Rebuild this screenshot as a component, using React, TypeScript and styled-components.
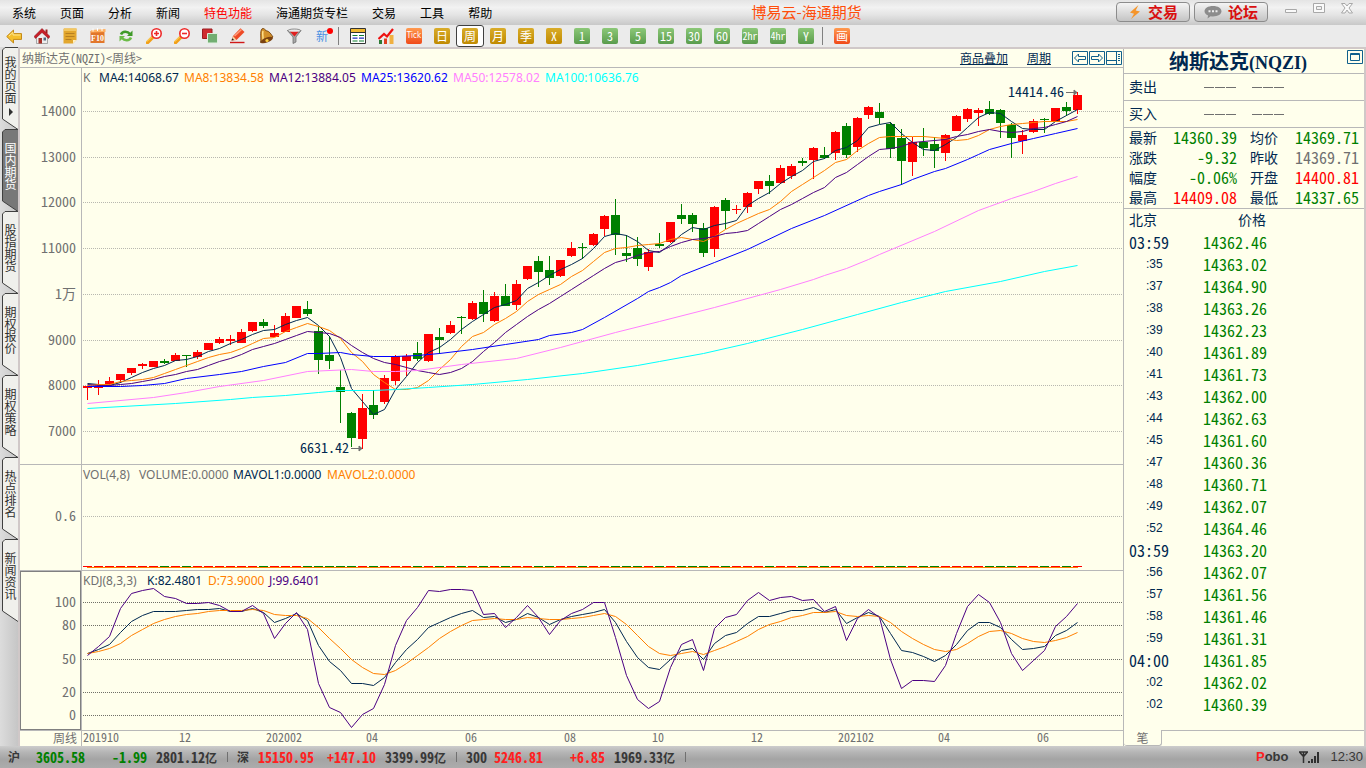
import React from 'react';
import styled, { createGlobalStyle, css } from 'styled-components';

const UI = "'Noto Sans CJK SC', sans-serif";
const MONO = "'Noto Sans Mono CJK SC', 'Noto Sans CJK SC', 'Liberation Mono', monospace";
const LATIN = "'Noto Sans', 'Open Sans', sans-serif";

const C = {
  paper: '#ffffec',
  line: '#b8b8b8',
  frame: '#d0c8c8',
  navy: '#002850',
  red: '#ff0000',
  green: '#008000',
  gray: '#707070',
  orange: '#ff8000',
  indigo: '#4b0082',
  blue: '#0000ff',
  pink: '#ff80ff',
  cyan: '#00ffff',
};

const GlobalStyle = createGlobalStyle`
  * { box-sizing: border-box; }
  body { margin: 0; background: ${C.paper}; font-family: ${UI}; font-size: 12px; }
  button { font: inherit; padding: 0; border: 0; background: none; color: inherit; }
  a { color: inherit; }
  svg { display: block; }
`;

const Page = styled.div`
  display: flex;
  flex-direction: column;
  min-height: 100vh;
`;

/* ---------- menu bar ---------- */

const MenuBar = styled.header`
  display: flex;
  height: 25px;
  background: linear-gradient(#e4e4e4, #f2f2f2 30%, #e4e4e4 60%, #c8c8c8);
`;
const Menus = styled.nav`
  display: flex;
  align-items: center;
  gap: 24px;
  padding-left: 12px;
`;
const MenuItem = styled.button<{ $hot?: boolean }>`
  line-height: 25px;
  color: ${(p) => (p.$hot ? C.red : '#000')};
`;
const Title = styled.h1`
  flex: 1;
  margin: 0;
  padding-left: 5px;
  font-size: 15px;
  font-weight: 400;
  line-height: 24px;
  text-align: center;
  color: #ff4d0a;
`;
const MenuRight = styled.div`
  display: flex;
  justify-content: flex-end;
  gap: 4px;
  padding: 2px 12px 0 0;
`;
const ActionButton = styled.button`
  display: flex;
  align-items: center;
  justify-content: center;
  gap: 6px;
  width: 74px;
  height: 20px;
  border: 1px solid #8c8c8c;
  border-radius: 4px;
  background: linear-gradient(#f4f4f4, #c4c4c4);
  color: #d90f0f;
  font-size: 15px;
  font-weight: 700;
  line-height: 18px;
`;
const WindowButtons = styled.div`
  display: flex;
  align-items: flex-start;
  gap: 14px;
  margin-left: 12px;
`;

/* ---------- toolbar ---------- */

const ToolBar = styled.div`
  display: flex;
  align-items: center;
  height: 22px;
  background: #ebebeb;
`;
const ToolButton = styled.button<{ $active?: boolean }>`
  display: flex;
  align-items: center;
  justify-content: center;
  width: 28px;
  height: 22px;
  ${(p) =>
    p.$active &&
    css`
      border: 1px solid #404040;
      border-radius: 3px;
      background: #fff;
    `}
`;
const Divider = styled.span`
  width: 8px;
  height: 18px;
  background: linear-gradient(#808080, #808080) 2px 0 / 1px 100% no-repeat;
`;
const badgeFill = {
  gold: 'linear-gradient(#d9ac2a, #c08a00)',
  green: 'linear-gradient(#8cc878, #5a9c4c)',
  orange: 'linear-gradient(#ff9a50, #f04a18)',
};
const badgeFont = {
  normal: css`
    font-family: ${MONO};
    font-size: 12px;
  `,
  small: css`
    font-family: ${MONO};
    font-size: 10px;
  `,
  tiny: css`
    font-family: 'DejaVu Sans Condensed', 'DejaVu Sans', sans-serif;
    font-size: 8px;
  `,
};
const Badge = styled.span<{ $tone: keyof typeof badgeFill; $size?: keyof typeof badgeFont }>`
  width: 16px;
  height: 16px;
  border-radius: 2px;
  background: ${(p) => badgeFill[p.$tone]};
  color: #fff;
  line-height: 15px;
  text-align: center;
  ${(p) => badgeFont[p.$size ?? 'normal']}
`;
const NewMark = styled.span`
  position: relative;
  color: #4a90e2;
  font-size: 12px;
  line-height: 20px;
  &::after {
    content: '';
    position: absolute;
    top: 2px;
    right: -5px;
    width: 6px;
    height: 6px;
    border-radius: 50%;
    background: #f00;
  }
`;

/* ---------- workspace ---------- */

const Workspace = styled.div`
  display: grid;
  grid-template-columns: 18px minmax(0, 1fr);
  flex: 1;
`;
const SideTabs = styled.nav`
  display: flex;
  flex-direction: column;
  background: linear-gradient(90deg, #dcdcdc, #c6c6c6);
`;
const SideTab = styled.button<{ $active?: boolean }>`
  position: relative;
  width: 18px;
  height: 82px;
  color: ${(p) => (p.$active ? '#fff' : '#303030')};
`;
const TabShape = styled.svg`
  position: absolute;
  inset: 0;
`;
const TabText = styled.span<{ $top?: boolean }>`
  position: relative;
  display: flex;
  align-items: center;
  height: 82px;
  width: 18px;
  padding: ${(p) => (p.$top ? 9 : 13)}px 0 0 3px;
  font-size: 12px;
  line-height: 15px;
  writing-mode: vertical-rl;
  text-orientation: upright;
`;
const Main = styled.main`
  display: grid;
  grid-template-columns: minmax(0, 1fr) 240px;
  border: 2px solid ${C.frame};
  border-bottom: 0;
  background: ${C.paper};
`;
const ChartColumn = styled.section`
  display: flex;
  flex-direction: column;
  border-right: 1px solid ${C.line};
`;
const ChartHead = styled.div`
  display: flex;
  align-items: center;
  height: 19px;
  padding-left: 2px;
  border-bottom: 1px solid ${C.line};
  font-family: ${MONO};
  font-size: 12px;
  line-height: 18px;
  color: ${C.gray};
`;
const HeadLinks = styled.div`
  display: flex;
  gap: 19px;
  margin-left: auto;
  margin-right: 21px;
  color: ${C.navy};
`;
const HeadIcons = styled.div`
  display: flex;
  gap: 1px;
  padding-right: 1px;
`;
const Panel = styled.div<{ $h: number; $grow?: boolean }>`
  position: relative;
  flex: ${(p) => (p.$grow ? 1 : 'none')};
  height: ${(p) => p.$h}px;
  overflow: hidden;
  border-bottom: 1px solid ${C.line};
`;
const Legend = styled.div`
  position: absolute;
  top: 2px;
  left: 63px;
  display: flex;
  gap: 4px;
  font-family: ${LATIN};
  font-size: 12px;
  line-height: 16px;
  white-space: nowrap;
`;
const LegendItem = styled.span<{ $color: string; $w?: number }>`
  min-width: ${(p) => p.$w ?? 0}px;
  color: ${(p) => p.$color};
`;
const Plot = styled.svg`
  width: 100%;
  height: 100%;
`;
const AxisText = styled.text`
  font-family: ${MONO};
  font-size: 14px;
  fill: ${C.gray};
  text-anchor: end;
`;
const MarkText = styled(AxisText)`
  fill: ${C.navy};
`;
const PeriodText = styled(AxisText)`
  font-size: 12px;
`;
const DateText = styled(AxisText)`
  font-size: 12px;
  text-anchor: middle;
`;
const DateAxis = styled.svg`
  width: 100%;
  height: 15px;
  overflow: visible;
`;

/* ---------- quote panel ---------- */

const Quote = styled.aside`
  display: flex;
  flex-direction: column;
  color: ${C.navy};
  font-size: 14px;
`;
const QuoteTitle = styled.div`
  position: relative;
  height: 25px;
  padding-right: 12px;
  border-bottom: 1px solid ${C.line};
  font-size: 20px;
  font-weight: 700;
  line-height: 24px;
  text-align: center;
  white-space: nowrap;
`;
const Ticker = styled.span`
  font-family: 'Liberation Serif', serif;
  font-size: 18px;
`;
const Maximize = styled.button`
  position: absolute;
  top: 1px;
  right: 1px;
`;
const SideRow = styled.div`
  display: grid;
  grid-template-columns: 75px 48px 1fr;
  height: 27px;
  padding-left: 5px;
  border-bottom: 1px solid ${C.line};
  line-height: 25px;
`;
const Dashes = styled.span`
  display: flex;
  align-items: center;
  gap: 1px;
  &::before,
  &::after,
  & > i {
    content: '';
    width: 10px;
    height: 1px;
    background: ${C.gray};
  }
`;
const Figures = styled.dl`
  display: grid;
  grid-template-columns: 28px 93px 28px 1fr;
  grid-auto-rows: 20px;
  margin: 0;
  padding: 0 5px 0 5px;
  border-bottom: 1px solid ${C.line};
  line-height: 19px;
`;
const Label = styled.dt``;
const Value = styled.dd<{ $color: string }>`
  margin: 0;
  padding-right: 13px;
  font-family: ${MONO};
  font-size: 16px;
  text-align: right;
  color: ${(p) => p.$color};
  &:nth-child(4n) {
    padding-right: 0;
  }
`;
const Ticks = styled.table`
  width: 100%;
  border-collapse: collapse;
  th {
    height: 23px;
    padding: 0 0 0 5px;
    font-weight: 400;
    line-height: 21px;
    text-align: left;
    vertical-align: top;
  }
  th + th {
    padding-left: 35px;
  }
  td {
    height: 22px;
    padding: 0;
    line-height: 20px;
    vertical-align: top;
  }
`;
const TimeCell = styled.td<{ $full: boolean }>`
  width: 79px;
  font-family: ${(p) => (p.$full ? MONO : "'Liberation Sans', sans-serif")};
  font-size: ${(p) => (p.$full ? 16 : 12)}px;
  && {
    padding-left: ${(p) => (p.$full ? 5 : 22)}px;
  }
`;
const PriceCell = styled.td`
  font-family: ${MONO};
  font-size: 16px;
  color: ${C.green};
`;
const BottomTabs = styled.div`
  display: flex;
  height: 16px;
  margin-top: auto;
`;
const BottomTab = styled.button`
  width: 38px;
  border: 1px solid ${C.line};
  border-top: 0;
  border-left: 0;
  border-radius: 0 0 3px 3px;
  font-size: 12px;
  line-height: 15px;
  color: ${C.gray};
`;
const BottomFill = styled.div`
  flex: 1;
  border-top: 1px solid ${C.line};
`;

/* ---------- status bar ---------- */

const StatusBar = styled.footer`
  display: flex;
  align-items: center;
  height: 22px;
  padding: 0 3px 0 8px;
  background: linear-gradient(#cccccc, #b4b4b4 30%, #a4a4a4 60%, #acacac);
  color: #383838;
  font-weight: 700;
  line-height: 22px;
`;
const IndexGroup = styled.div`
  display: grid;
  grid-template-columns: 21px 56px 62px 71px 19px;
  align-items: center;
  font-family: ${MONO};
  font-size: 14px;
`;
const IndexName = styled.span<{ $code: boolean }>`
  font-size: ${(p) => (p.$code ? 14 : 12)}px;
`;
const IndexNumber = styled.span<{ $up: boolean }>`
  text-align: right;
  color: ${(p) => (p.$up ? '#ff2020' : C.green)};
`;
const Turnover = styled.span`
  padding-left: 9px;
  white-space: nowrap;
  small {
    font-size: 12px;
  }
`;
const StatusRule = styled.i`
  justify-self: center;
  width: 1px;
  height: 10px;
  background: #707070;
`;
const StatusRight = styled.div`
  display: flex;
  align-items: center;
  gap: 10px;
  margin-left: auto;
`;
const Brand = styled.span`
  font-family: 'Liberation Sans', sans-serif;
  font-size: 13px;
  em {
    font-style: normal;
    color: #ff2020;
  }
`;
const Clock = styled.time`
  font-family: 'Liberation Sans', sans-serif;
  font-size: 13px;
  font-weight: 400;
`;

/* ---------- data ---------- */

// [wick top, body top, body bottom, wick bottom, rising]
const candles: [number, number, number, number, number][] = [
  [386, 386, 388, 400, 1], [380, 386, 388, 395, 1], [377, 381, 384, 385, 1], [374, 374, 380, 383, 1],
  [368, 368, 373, 375, 1], [363, 364, 366, 369, 1], [361, 361, 367, 367, 1], [359, 361, 363, 364, 0],
  [353, 355, 361, 361, 1], [355, 355, 356, 367, 0], [350, 352, 357, 359, 1], [343, 343, 350, 350, 1],
  [337, 339, 343, 344, 1], [335, 339, 341, 345, 1], [329, 332, 343, 343, 1], [322, 322, 331, 332, 1],
  [319, 322, 326, 328, 0], [325, 333, 337, 337, 1], [313, 316, 332, 332, 1], [306, 306, 318, 318, 1],
  [301, 309, 314, 316, 0], [326, 331, 360, 374, 0], [336, 355, 361, 369, 0], [370, 387, 392, 423, 0],
  [412, 413, 438, 447, 0], [394, 408, 439, 449, 1], [390, 405, 415, 419, 0], [375, 378, 402, 404, 1],
  [355, 356, 381, 385, 1], [354, 356, 361, 376, 1], [342, 353, 359, 361, 0], [334, 334, 361, 362, 1],
  [328, 337, 340, 354, 0], [321, 325, 333, 334, 1], [316, 317, 318, 334, 0], [301, 303, 319, 320, 1],
  [290, 302, 314, 322, 0], [292, 296, 321, 322, 1], [284, 296, 306, 306, 0], [280, 284, 305, 310, 1],
  [266, 266, 279, 280, 1], [256, 261, 272, 287, 0], [256, 270, 278, 285, 0], [260, 260, 276, 277, 1],
  [242, 248, 256, 257, 1], [243, 247, 248, 259, 0], [233, 234, 245, 246, 1], [215, 216, 229, 236, 1],
  [199, 215, 235, 255, 0], [235, 253, 256, 262, 0], [237, 248, 259, 266, 0], [249, 252, 267, 271, 1],
  [233, 244, 246, 248, 0], [222, 222, 242, 243, 1], [204, 215, 219, 224, 0], [213, 215, 224, 232, 0],
  [223, 228, 253, 257, 0], [206, 207, 249, 257, 1], [198, 200, 211, 229, 0], [205, 209, 210, 214, 1],
  [192, 193, 207, 213, 1], [181, 181, 189, 194, 1], [175, 181, 186, 194, 0], [165, 168, 183, 184, 1],
  [164, 166, 176, 179, 1], [158, 161, 163, 166, 0], [147, 148, 160, 179, 1], [147, 155, 158, 159, 0],
  [131, 132, 153, 160, 1], [123, 126, 155, 158, 0], [117, 118, 147, 152, 1], [106, 107, 115, 119, 1],
  [103, 112, 118, 124, 0], [122, 124, 149, 158, 0], [129, 138, 161, 185, 0], [137, 142, 162, 176, 1],
  [128, 142, 148, 156, 0], [137, 144, 151, 168, 0], [134, 135, 153, 161, 1], [115, 116, 131, 131, 1],
  [108, 109, 119, 122, 1], [108, 110, 113, 126, 1], [101, 109, 114, 115, 0], [109, 110, 123, 138, 0],
  [123, 125, 138, 158, 0], [130, 135, 141, 154, 1], [119, 121, 132, 133, 1], [118, 119, 120, 133, 0],
  [108, 108, 121, 121, 1], [102, 107, 111, 116, 0], [92, 95, 110, 114, 1],
];

const ma4 = [383, 384, 385, 382, 377, 372, 368, 365, 360, 359, 356, 351, 348, 343, 339, 334, 330, 329, 324, 320, 317, 325, 336, 357, 388, 401, 414, 409, 389, 376, 362, 352, 347, 339, 329, 321, 314, 307, 304, 300, 288, 282, 275, 269, 264, 258, 248, 236, 233, 235, 241, 250, 252, 244, 234, 227, 229, 225, 223, 220, 205, 198, 192, 183, 176, 170, 161, 158, 150, 147, 140, 127, 124, 122, 133, 142, 149, 150, 144, 137, 127, 117, 112, 113, 121, 128, 129, 129, 121, 115, 109];
const ma8 = [385, 384, 384, 381, 380, 379, 377, 373, 369, 365, 361, 357, 354, 352, 348, 343, 338, 337, 331, 327, 323, 326, 330, 338, 352, 361, 374, 382, 389, 389, 387, 380, 369, 359, 346, 336, 332, 324, 318, 311, 301, 294, 289, 284, 276, 270, 261, 252, 248, 247, 245, 244, 243, 239, 237, 239, 241, 236, 229, 223, 218, 213, 209, 201, 191, 184, 177, 170, 162, 159, 150, 143, 137, 136, 136, 136, 136, 137, 138, 140, 139, 135, 129, 126, 124, 123, 122, 121, 121, 121, 119];
const ma12 = [384, 385, 385, 384, 383, 381, 379, 376, 374, 371, 369, 365, 361, 358, 354, 349, 346, 343, 339, 335, 331, 332, 333, 337, 345, 352, 358, 362, 364, 367, 370, 372, 374, 372, 368, 361, 351, 342, 332, 324, 316, 309, 303, 296, 289, 282, 275, 268, 262, 259, 255, 252, 251, 246, 242, 239, 238, 236, 233, 232, 230, 223, 216, 209, 204, 198, 192, 187, 177, 172, 164, 156, 149, 148, 146, 142, 141, 140, 139, 136, 134, 131, 129, 131, 132, 131, 128, 127, 124, 121, 116];
const ma25: [number, number][] = [[0, 386], [3, 386], [5, 385], [7, 383], [9, 378], [12, 374], [14, 371], [16, 366], [18, 362], [20, 353], [21, 353], [23, 352], [24, 354], [26, 356], [28, 356], [30, 355], [32, 353], [35, 349], [38, 344], [41, 339], [42, 335], [44, 332], [45, 329], [47, 317], [50, 298], [51, 291], [52, 287], [53, 282], [54, 275], [57, 262], [60, 249], [64, 228], [67, 215], [71, 195], [72, 191], [74, 184], [75, 179], [77, 171], [78, 168], [80, 159], [81, 154], [82, 149], [84, 143], [86, 138], [88, 133], [90, 128]];
const ma50: [number, number][] = [[0, 403], [6, 397], [9, 392], [12, 386], [16, 380], [20, 371], [24, 369], [26, 371], [28, 371], [30, 370], [34, 364], [39, 358], [43, 347], [48, 332], [52, 321], [57, 307], [63, 289], [66, 279], [67, 275], [69, 268], [71, 259], [72, 254], [77, 231], [81, 210], [82, 206], [84, 198], [86, 191], [88, 183], [90, 176]];
const ma100: [number, number][] = [[0, 408], [8, 403], [13, 399], [15, 397], [18, 395], [21, 392], [23, 390], [26, 390], [28, 389], [31, 387], [35, 384], [40, 379], [45, 373], [50, 365], [52, 361], [56, 353], [60, 343], [65, 329], [70, 314], [74, 302], [78, 291], [83, 281], [87, 271], [90, 265]];
const kdjJ = [655, 646, 636, 608, 593, 590, 588, 596, 598, 603, 603, 602, 605, 611, 611, 605, 613, 638, 623, 612, 629, 683, 707, 712, 727, 714, 708, 684, 645, 620, 607, 590, 591, 589, 589, 590, 614, 613, 627, 617, 605, 617, 634, 620, 613, 609, 602, 602, 637, 675, 699, 708, 701, 667, 644, 639, 670, 628, 617, 614, 600, 592, 600, 597, 596, 600, 599, 611, 606, 640, 618, 609, 617, 659, 688, 680, 680, 681, 665, 633, 606, 594, 602, 622, 653, 670, 660, 650, 626, 616, 603];
const kdjK = [653, 649, 644, 632, 621, 615, 611, 611, 611, 610, 609, 609, 608, 611, 611, 608, 612, 622, 618, 613, 620, 645, 661, 670, 683, 683, 685, 677, 662, 649, 639, 627, 622, 617, 613, 610, 617, 616, 622, 619, 613, 617, 624, 619, 616, 614, 612, 609, 622, 641, 657, 667, 669, 659, 650, 648, 659, 643, 635, 632, 623, 616, 616, 613, 610, 610, 607, 612, 609, 623, 617, 612, 616, 633, 650, 652, 656, 661, 655, 644, 630, 622, 622, 627, 639, 649, 648, 646, 635, 630, 622];
const kdjD = [653, 651, 648, 643, 635, 629, 623, 619, 616, 614, 613, 611, 610, 610, 610, 609, 610, 614, 615, 615, 618, 627, 638, 648, 659, 667, 673, 674, 670, 663, 655, 647, 638, 631, 625, 620, 619, 618, 619, 619, 617, 618, 619, 619, 618, 617, 615, 613, 616, 624, 635, 646, 653, 655, 653, 651, 654, 650, 646, 641, 636, 629, 624, 621, 617, 615, 612, 612, 611, 615, 616, 615, 616, 622, 631, 638, 644, 649, 651, 649, 643, 636, 631, 630, 633, 638, 641, 642, 640, 637, 632];

const xAt = (i: number) => 87 + 11 * i;
const dense = (ys: number[]): [number, number][] => ys.map((y, i) => [i, y]);

const Line = ({ data, color }: { data: [number, number][]; color: string }) => (
  <polyline
    points={data.map(([i, y]) => `${xAt(i) + 0.5},${y + 0.5}`).join(' ')}
    fill="none"
    stroke={color}
    strokeWidth="1"
  />
);
const Grid = ({ y, color = '#b8b8b0' }: { y: number; color?: string }) => (
  <line x1="83" x2="4000" y1={y + 0.5} y2={y + 0.5} stroke={color} strokeDasharray="1 1" />
);
const AxisRule = ({ h }: { h: number }) => <path d={`M81.500 0v${h}`} stroke={C.line} />;
const PointArrow = ({ x, y }: { x: number; y: number }) => (
  <path d={`M${x} ${y + 0.5}h11M${x + 8} ${y - 2}l3 2.5l-3 2.5z`} fill={C.gray} stroke={C.gray} />
);

const priceAxis: [string, number][] = [['14000', 111], ['13000', 157], ['12000', 202], ['11000', 248], ['1万', 294], ['9000', 340], ['8000', 385], ['7000', 431]];
const kdjAxis: [string, number][] = [['100', 602], ['80', 625], ['50', 659], ['20', 692], ['0', 715]];
const dates: [string, number][] = [['12', 185], ['202002', 284], ['04', 372], ['06', 471], ['08', 570], ['10', 658], ['12', 757], ['202102', 856], ['04', 944], ['06', 1043]];

const figures: [string, string, string][] = [
  ['最新', '14360.39', C.green], ['均价', '14369.71', C.green],
  ['涨跌', '-9.32', C.green], ['昨收', '14369.71', C.gray],
  ['幅度', '-0.06%', C.green], ['开盘', '14400.81', C.red],
  ['最高', '14409.08', C.red], ['最低', '14337.65', C.green],
];
const ticks: [string, string][] = [
  ['03:59', '14362.46'], [':35', '14363.02'], [':37', '14364.90'], [':38', '14363.26'], [':39', '14362.23'],
  [':40', '14361.89'], [':41', '14361.73'], [':43', '14362.00'], [':44', '14362.63'], [':45', '14361.60'],
  [':47', '14360.36'], [':48', '14360.71'], [':49', '14362.07'], [':52', '14364.46'], ['03:59', '14363.20'],
  [':56', '14362.07'], [':57', '14361.56'], [':58', '14361.46'], [':59', '14361.31'], ['04:00', '14361.85'],
  [':02', '14362.02'], [':02', '14360.39'],
];
const indexes: [string, string, string, string, boolean][] = [
  ['沪', '3605.58', '-1.99', '2801.12', false],
  ['深', '15150.95', '+147.10', '3399.99', true],
  ['300', '5246.81', '+6.85', '1969.33', true],
];
const menus = ['系统', '页面', '分析', '新闻', '特色功能', '海通期货专栏', '交易', '工具', '帮助'];
const sideTabs = ['我的页面', '国内期货', '股指期货', '期权报价', '期权策略', '热点排名', '新闻资讯'];

/* ---------- icons ---------- */

const Icon = ({ children }: { children: React.ReactNode }) => (
  <svg width="16" height="16" viewBox="0 0 16 16">{children}</svg>
);

const BackIcon = () => (
  <Icon>
    <path d="M.7 8.500L7.500 2v3.600h8v5.800h-8V15z" fill="#f5bf2c" stroke="#c48a18" strokeLinejoin="round" />
    <path d="M3 8l4-3.600V7h7.500" fill="none" stroke="#ffe890" />
  </Icon>
);
const HomeIcon = () => (
  <Icon>
    <path d="M2.500 8v7.500h11V8L8 3.500z" fill="#eeeeee" stroke="#777" strokeWidth=".6" />
    <path d="M11.500 1.500h2v4h-2z" fill="#a02020" />
    <path d="M0 8.500L8 .5l8 8-1.500 2L8 4.500 1.500 10.500z" fill="#c81e28" stroke="#801018" strokeWidth=".5" />
    <path d="M4.500 10H8v5.500H4.500z" fill="#a83028" />
    <path d="M9.500 9.500H12v3H9.500z" fill="#506880" />
  </Icon>
);
const NoteIcon = () => (
  <Icon>
    <path d="M2 .5h12.500V12L11 15.500H1.500V1z" fill="#e3a72e" />
    <path d="M2 .5h12.500v2.500H2z" fill="#f3c760" />
    <path d="M3.500 5.500h9M3.500 8.500h9M3.500 11.500h6" stroke="#b88020" />
    <path d="M11 15.500V12h3.500z" fill="#fff0c0" />
  </Icon>
);
const F10Icon = () => (
  <Icon>
    <path d="M.5 3h14v12h-14z" fill="#e2762a" />
    <path d="M1.500 2L15.500 1v3l-15 .5z" fill="#ffb060" />
    <path d="M3 .5v3M7.500 0v3M12 0v3" stroke="#fff" />
    <text x="7.500" y="12.500" fontSize="8" fontWeight="700" textAnchor="middle" fill="#fff" fontFamily="Liberation Serif">F10</text>
  </Icon>
);
const RefreshIcon = () => (
  <Icon>
    <path d="M3 6.500C4.500 3 9.500 3 12 6" fill="none" stroke="#3f9a28" strokeWidth="2.600" />
    <path d="M14.500 2.500V8H9z" fill="#3f9a28" />
    <path d="M13 9.500C11.500 13 6.500 13 4 10" fill="none" stroke="#6cbc48" strokeWidth="2.600" />
    <path d="M1.500 13.500V8H7z" fill="#6cbc48" />
  </Icon>
);
const ZoomIcon = ({ plus }: { plus?: boolean }) => (
  <Icon>
    <path d="M6.500 9.500L1.500 14.500" stroke="#f2a018" strokeWidth="3.500" strokeLinecap="round" />
    <path d="M5.500 9L1 13.500" stroke="#ffe070" strokeLinecap="round" />
    <circle cx="10.500" cy="5.500" r="4.700" fill="#fff" stroke="#ee2a2a" strokeWidth="1.600" />
    <path d={plus ? 'M8 5.500h5M10.500 3v5' : 'M8 5.500h5'} stroke="#ee2a2a" strokeWidth="1.600" />
  </Icon>
);
const LayersIcon = () => (
  <Icon>
    <path d="M.5 1h9.500v9.500H.5z" fill="#cf2c30" stroke="#9c1c20" />
    <path d="M5.500 5.500h10V15h-10z" fill="#72ae72" stroke="#e0f0e0" />
  </Icon>
);
const PencilIcon = () => (
  <Icon>
    <path d="M1.500 12.500L3 8 10.500.3l4 3.700L6.500 12z" fill="#ee4a26" />
    <path d="M4.500 8L11.500 1.500" stroke="#ff9c78" strokeWidth="1.600" />
    <path d="M1.500 12.500L3 8l3.500 4z" fill="#f2d2a0" />
    <path d="M1.500 12.500l.8-2.200 1.800 1.800z" fill="#222" />
    <path d="M0 14.500h14.500" stroke="#d01818" strokeWidth="1.400" />
  </Icon>
);
const BellIcon = () => (
  <Icon>
    <path d="M4 .8C6 0 7 1 7.500 2.500c4 .5 5.500 3.500 7.500 6.500L2.500 14.500C3.500 10 1.500 4 4 .8z" fill="#d2902a" stroke="#6a3808" strokeWidth=".8" />
    <path d="M5 3c-1 3 .5 6 0 9" stroke="#ffe08a" strokeWidth="1.500" fill="none" />
    <ellipse cx="8.800" cy="12" rx="6.500" ry="2.500" transform="rotate(-22 8.800 12)" fill="#7a4210" />
    <circle cx="9" cy="12.500" r="1.600" fill="#ffd040" />
  </Icon>
);
const FunnelIcon = () => (
  <Icon>
    <path d="M1.500 2.500L7 9v6.500l3-1.500V9l5-6.500z" fill="#a8a8a8" stroke="#666" strokeWidth=".7" />
    <ellipse cx="8.300" cy="2.800" rx="6.500" ry="1.800" fill="#e8e8e8" stroke="#666" strokeWidth=".7" />
    <path d="M4 3.800h8.500L8.500 8.500z" fill="#e02020" />
  </Icon>
);
const TableIcon = () => (
  <Icon>
    <path d="M.5.5h15v15H.5z" fill="#fff" stroke="#333" />
    <path d="M1 1h14v3H1z" fill="#f0b830" />
    <path d="M1 4.500h14" stroke="#333" />
    <path d="M2.500 7.500h5M9 7.500h5" stroke="#108030" strokeWidth="1.200" />
    <path d="M2.500 10.200h5M9 10.200h5" stroke="#2030c0" strokeWidth="1.200" />
    <path d="M2.500 13h5M9 13h5" stroke="#108030" strokeWidth="1.200" />
  </Icon>
);
const TrendIcon = () => (
  <Icon>
    <path d="M1 12h3v4H1z" fill="#2e7a34" />
    <path d="M6 10.500h3V16H6z" fill="#e04020" />
    <path d="M11.500 7h4v9h-4z" fill="#f0b040" />
    <path d="M.5 11L6 6l3 2.500 6-7.500" fill="none" stroke="#ee1010" strokeWidth="2.200" />
  </Icon>
);
const BoltIcon = () => (
  <svg width="14" height="16" viewBox="0 0 14 16"><path d="M10.500 1L2 8.500l4 1.200L3 15l9-7.500-4.300-1z" fill="#f5952a" /></svg>
);
const ChatIcon = () => (
  <svg width="18" height="14" viewBox="0 0 18 14">
    <path d="M9 1c5 0 8.500 2.200 8.500 5.300S14 11.500 9 11.500c-.8 0-1.600 0-2.300-.2L3.500 13.500l.6-3C2 9.600.5 8.100.5 6.300.5 3.200 4 1 9 1z" fill="#8c8c8c" />
    <path d="M4.500 5.300h2v2h-2zM8 5.300h2v2H8zM11.500 5.300h2v2h-2z" fill="#eee" />
  </svg>
);

const FrameIcon = ({ d }: { d: string }) => (
  <svg width="16" height="14" viewBox="0 0 16 14">
    <path d="M.5.5h15v13H.5z" fill="none" stroke="#10608c" />
    <path d={d} fill="none" stroke="#10608c" />
  </svg>
);

const WindowIcon = ({ d }: { d: string }) => (
  <svg width="14" height="12" viewBox="0 -1 14 12"><path d={d} fill="#fafafa" stroke="#a8a8a8" fillRule="evenodd" /></svg>
);

type Tool = { name: string; body: React.ReactNode; active?: boolean };
const pageTools: Tool[] = [
  { name: '后退', body: <BackIcon /> }, { name: '主页', body: <HomeIcon /> }, { name: '公告', body: <NoteIcon /> },
  { name: 'F10', body: <F10Icon /> }, { name: '刷新', body: <RefreshIcon /> }, { name: '放大', body: <ZoomIcon plus /> },
  { name: '缩小', body: <ZoomIcon /> }, { name: '叠加', body: <LayersIcon /> }, { name: '画笔', body: <PencilIcon /> },
  { name: '预警', body: <BellIcon /> }, { name: '筛选', body: <FunnelIcon /> }, { name: '新', body: <NewMark>新</NewMark> },
];
const periodTools: Tool[] = [
  { name: '报价', body: <TableIcon /> },
  { name: '走势', body: <TrendIcon /> },
  { name: 'Tick', body: <Badge $tone="orange" $size="tiny">Tick</Badge> },
  ...['日', '周', '月', '季', 'X'].map((t) => ({ name: t, body: <Badge $tone="gold">{t}</Badge>, active: t === '周' })),
  ...['1', '3', '5', '15', '30', '60', '2hr', '4hr', 'Y'].map((t) => ({
    name: t,
    body: <Badge $tone="green" $size={t.length > 2 ? 'small' : 'normal'}>{t}</Badge>,
  })),
];

const Tools = ({ items }: { items: Tool[] }) => (
  <>
    {items.map((t) => (
      <ToolButton key={t.name} $active={t.active} aria-label={t.name}>{t.body}</ToolButton>
    ))}
  </>
);

/* ---------- page ---------- */

const PricePanel = () => (
  <Panel $h={397}>
    <Plot>
      <g transform="translate(-20 -68)">
        {priceAxis.map(([t, y]) => (
          <React.Fragment key={t}>
            <AxisText x="76" y={y + 5}>{t}</AxisText>
            <Grid y={y} />
          </React.Fragment>
        ))}
        <AxisRule h={464} />
        {candles.map(([wt, bt, bb, wb, up], i) => (
          <g key={i} fill={up ? C.red : C.green} shapeRendering="crispEdges">
            <rect x={xAt(i)} y={wt} width="1" height={wb - wt} />
            <rect x={xAt(i) - 4} y={bt} width="9" height={bb - bt} />
          </g>
        ))}
        <Line data={dense(ma4)} color={C.navy} />
        <Line data={dense(ma8)} color={C.orange} />
        <Line data={dense(ma12)} color={C.indigo} />
        <Line data={ma25} color={C.blue} />
        <Line data={ma50} color={C.pink} />
        <Line data={ma100} color={C.cyan} />
        <MarkText x="1064" y="97">14414.46</MarkText>
        <PointArrow x={1066} y={92} />
        <MarkText x="349" y="453">6631.42</MarkText>
        <PointArrow x={351} y={448} />
      </g>
    </Plot>
    <Legend>
      <LegendItem $color={C.gray} $w={12}>K</LegendItem>
      <LegendItem $color={C.navy} $w={81}>MA4:14068.67</LegendItem>
      <LegendItem $color={C.orange} $w={81}>MA8:13834.58</LegendItem>
      <LegendItem $color={C.indigo} $w={88}>MA12:13884.05</LegendItem>
      <LegendItem $color={C.blue} $w={88}>MA25:13620.62</LegendItem>
      <LegendItem $color={C.pink} $w={88}>MA50:12578.02</LegendItem>
      <LegendItem $color={C.cyan}>MA100:10636.76</LegendItem>
    </Legend>
  </Panel>
);

const VolumePanel = () => (
  <Panel $h={106}>
    <Plot>
      <g transform="translate(-20 -465)">
        <AxisText x="76" y="521">0.6</AxisText>
        <Grid y={516} />
        <AxisRule h={570} />
        <line x1="87" x2="1078" y1="567.5" y2="567.5" stroke={C.orange} />
        {candles.map((c, i) => (
          <rect key={i} x={xAt(i) - 4} y="566" width="9" height="1" fill={c[4] ? C.red : C.green} />
        ))}
      </g>
    </Plot>
    <Legend>
      <LegendItem $color={C.gray} $w={52}>VOL(4,8)</LegendItem>
      <LegendItem $color={C.gray} $w={90}>VOLUME:0.0000</LegendItem>
      <LegendItem $color={C.navy} $w={90}>MAVOL1:0.0000</LegendItem>
      <LegendItem $color={C.orange} $w={90}>MAVOL2:0.0000</LegendItem>
    </Legend>
  </Panel>
);

const KdjPanel = () => (
  <Panel $h={160} $grow>
    <Plot>
      <g transform="translate(-20 -571)">
        {kdjAxis.map(([t, y]) => (
          <React.Fragment key={t}>
            <AxisText x="76" y={y + 5}>{t}</AxisText>
            <Grid y={y} color="#707068" />
          </React.Fragment>
        ))}
        <AxisRule h={1000} />
        <rect x="20.500" y="571.500" width="60" height="158" fill="none" stroke="#808080" />
        <Line data={dense(kdjK)} color={C.navy} />
        <Line data={dense(kdjD)} color={C.orange} />
        <Line data={dense(kdjJ)} color={C.indigo} />
      </g>
    </Plot>
    <Legend>
      <LegendItem $color={C.gray} $w={60}>KDJ(8,3,3)</LegendItem>
      <LegendItem $color={C.navy} $w={57}>K:82.4801</LegendItem>
      <LegendItem $color={C.orange} $w={57}>D:73.9000</LegendItem>
      <LegendItem $color={C.indigo}>J:99.6401</LegendItem>
    </Legend>
  </Panel>
);

export default function App() {
  return (
    <Page>
      <GlobalStyle />
      <MenuBar>
        <Menus>
          {menus.map((m) => <MenuItem key={m} $hot={m === '特色功能'}>{m}</MenuItem>)}
        </Menus>
        <Title>博易云-海通期货</Title>
        <MenuRight>
          <ActionButton><BoltIcon />交易</ActionButton>
          <ActionButton><ChatIcon />论坛</ActionButton>
          <WindowButtons>
            <button aria-label="最小化"><WindowIcon d="M1.500 6.500h11v3h-11z" /></button>
            <button aria-label="还原"><WindowIcon d="M1.500.5h11v9h-11zM4.500 3.500h5v3h-5z" /></button>
            <button aria-label="关闭"><WindowIcon d="M1.500.5h3.500L7 3l2-2.500h3.500L9 5l3.500 5H9L7 7 5 10H1.500L5 5z" /></button>
          </WindowButtons>
        </MenuRight>
      </MenuBar>
      <ToolBar>
        <Tools items={pageTools} />
        <Divider />
        <Tools items={periodTools} />
        <Divider />
        <ToolButton aria-label="画线"><Badge $tone="orange">画</Badge></ToolButton>
      </ToolBar>
      <Workspace>
        <SideTabs>
          {sideTabs.map((t, n) => (
            <SideTab key={t} $active={n === 1}>
              <TabShape width="18" height="83">
                <path d="M18 .5H5L2.500 3v69L18 82.500z" fill={n === 1 ? '#787878' : '#f0f0ec'} />
                <path d="M18 .5H5L2.500 3v69L18 82.500" fill="none" stroke="#404040" />
              </TabShape>
              <TabText $top={n === 0}>
                {t}
                {n === 0 && (
                  <svg width="6" height="14" viewBox="0 0 6 14"><path d="M1 4l4 4-4 4z" fill="#303030" /></svg>
                )}
              </TabText>
            </SideTab>
          ))}
        </SideTabs>
        <Main>
          <ChartColumn>
            <ChartHead>
              纳斯达克(NQZI)&lt;周线&gt;
              <HeadLinks>
                <a href="#overlay">商品叠加</a>
                <a href="#period">周期</a>
              </HeadLinks>
              <HeadIcons>
                <button aria-label="上一个"><FrameIcon d="M2.500 7L6.500 3v2.500h7v3h-7V11z" /></button>
                <button aria-label="下一个"><FrameIcon d="M13.500 7L9.500 3v2.500h-7v3h7V11z" /></button>
                <button aria-label="布局"><FrameIcon d="M10.500 1v12M1 9.500h9.500M12 3.500h2M12 5.500h2M12 7.500h2M12 9.500h2" /></button>
              </HeadIcons>
            </ChartHead>
            <PricePanel />
            <VolumePanel />
            <KdjPanel />
            <DateAxis>
              <g transform="translate(-20 0)">
                <PeriodText x="77" y="12">周线</PeriodText>
                <AxisRule h={15} />
                <DateText x="101" y="11">201910</DateText>
                {dates.map(([t, x]) => <DateText key={x} x={x} y="11">{t}</DateText>)}
              </g>
            </DateAxis>
          </ChartColumn>
          <Quote>
            <QuoteTitle>
              纳斯达克<Ticker>(NQZI)</Ticker>
              <Maximize aria-label="最大化"><FrameIcon d="M3.500 3.500h9v7h-9zM3.500 4.500h9" /></Maximize>
            </QuoteTitle>
            {['卖出', '买入'].map((t) => (
              <SideRow key={t}>
                <span>{t}</span>
                <Dashes><i /></Dashes>
                <Dashes><i /></Dashes>
              </SideRow>
            ))}
            <Figures>
              {figures.map(([label, value, color]) => (
                <React.Fragment key={label}>
                  <Label>{label}</Label>
                  <Value $color={color}>{value}</Value>
                </React.Fragment>
              ))}
            </Figures>
            <Ticks>
              <thead>
                <tr><th>北京</th><th>价格</th></tr>
              </thead>
              <tbody>
                {ticks.map(([time, price], i) => (
                  <tr key={i}>
                    <TimeCell $full={time.length > 3}>{time}</TimeCell>
                    <PriceCell>{price}</PriceCell>
                  </tr>
                ))}
              </tbody>
            </Ticks>
            <BottomTabs>
              <BottomTab>笔</BottomTab>
              <BottomFill />
            </BottomTabs>
          </Quote>
        </Main>
      </Workspace>
      <StatusBar>
        {indexes.map(([name, price, change, turnover, up]) => (
          <IndexGroup key={name}>
            <IndexName $code={name.length > 1}>{name}</IndexName>
            <IndexNumber $up={up}>{price}</IndexNumber>
            <IndexNumber $up={up}>{change}</IndexNumber>
            <Turnover>{turnover}<small>亿</small></Turnover>
            <StatusRule />
          </IndexGroup>
        ))}
        <StatusRight>
          <Brand><em>P</em>obo</Brand>
          <svg width="22" height="12" viewBox="0 0 22 12">
            <path d="M1 1h9M1.500 1l4 4.500 4-4.500M5.500 1v11" fill="none" stroke="#303030" strokeWidth="1.500" />
            <path d="M10 10h2v2h-2zM13 8h2v4h-2zM16 5h2v7h-2zM19 1h2v11h-2z" fill="#303030" />
          </svg>
          <Clock>12:30</Clock>
        </StatusRight>
      </StatusBar>
    </Page>
  );
}
